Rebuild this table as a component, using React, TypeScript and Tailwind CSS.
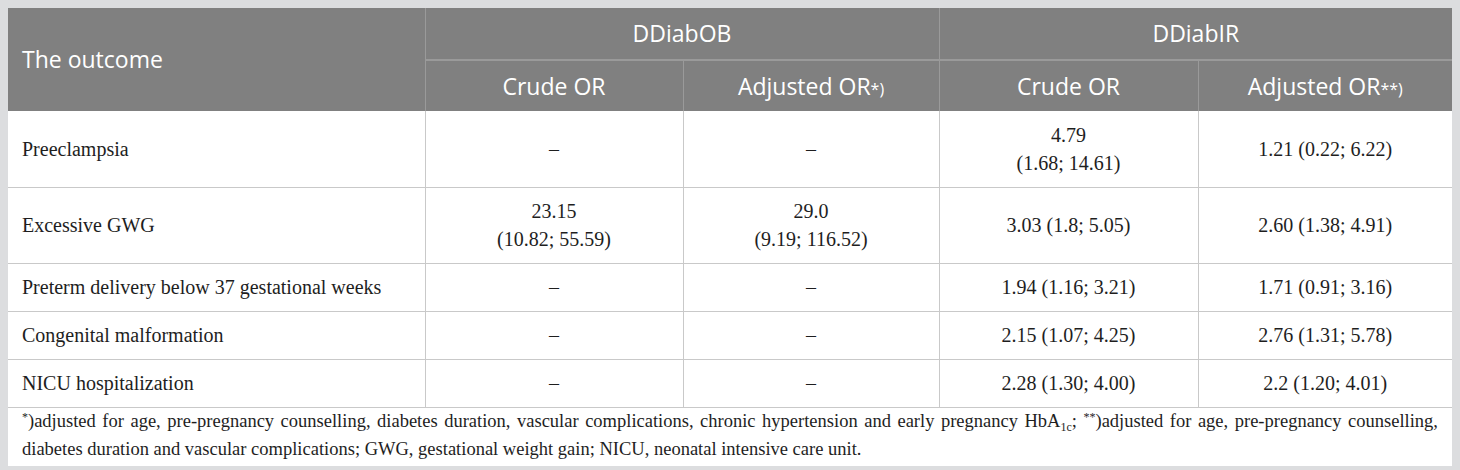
import React from "react";

const serif = { fontFamily: '"Liberation Serif", "Times New Roman", serif' };
const sans = { fontFamily: '"Open Sans", "Noto Sans", sans-serif' };

type Row = { label: string; c: React.ReactNode[]; tall?: boolean };

const rows: Row[] = [
  {
    label: "Preeclampsia",
    tall: true,
    c: ["–", "–", <>4.79<br />(1.68; 14.61)</>, "1.21 (0.22; 6.22)"],
  },
  {
    label: "Excessive GWG",
    tall: true,
    c: [
      <>23.15<br />(10.82; 55.59)</>,
      <>29.0<br />(9.19; 116.52)</>,
      "3.03 (1.8; 5.05)",
      "2.60 (1.38; 4.91)",
    ],
  },
  {
    label: "Preterm delivery below 37 gestational weeks",
    c: ["–", "–", "1.94 (1.16; 3.21)", "1.71 (0.91; 3.16)"],
  },
  {
    label: "Congenital malformation",
    c: ["–", "–", "2.15 (1.07; 4.25)", "2.76 (1.31; 5.78)"],
  },
  {
    label: "NICU hospitalization",
    c: ["–", "–", "2.28 (1.30; 4.00)", "2.2 (1.20; 4.01)"],
  },
];

export default function App() {
  return (
    <div className="w-[1460px] h-[470px] bg-[#dcdddf] pt-[8px] pl-[8px]">
      <div className="w-[1444px] bg-white">
        <table className="w-full border-collapse table-fixed">
          <colgroup>
            <col className="w-[417px]" />
            <col className="w-[258px]" />
            <col className="w-[256px]" />
            <col className="w-[259px]" />
            <col className="w-[254px]" />
          </colgroup>
          <thead style={sans} className="bg-[#808080] text-white text-[23px]">
            <tr className="h-[52px]">
              <th
                rowSpan={2}
                className="font-normal text-left pl-[14px] border-r border-[#9a9a9a] align-middle"
              >
                The outcome
              </th>
              <th colSpan={2} className="font-normal text-center border-r border-b-2 border-[#9a9a9a]">
                DDiabOB
              </th>
              <th colSpan={2} className="font-normal text-center border-b-2 border-[#9a9a9a]">
                DDiabIR
              </th>
            </tr>
            <tr className="h-[51px]">
              <th className="font-normal text-center border-r border-[#9a9a9a]">Crude OR</th>
              <th className="font-normal text-center border-r border-[#9a9a9a]">
                Adjusted OR<span className="text-[16px]">*)</span>
              </th>
              <th className="font-normal text-center border-r border-[#9a9a9a]">Crude OR</th>
              <th className="font-normal text-center">
                Adjusted OR<span className="text-[16px]">**)</span>
              </th>
            </tr>
          </thead>
          <tbody style={serif} className="text-[#1e1e1e] text-[20px] leading-[28px]">
            {rows.map((r, i) => (
              <tr key={i} className={`${r.tall ? "h-[76px]" : "h-[48px]"} border-b border-[#c9c9c9]`}>
                <td className="pl-[14px] border-r border-[#c9c9c9]">{r.label}</td>
                {r.c.map((v, j) => (
                  <td
                    key={j}
                    className={`text-center ${j < 3 ? "border-r border-[#c9c9c9]" : ""}`}
                  >
                    {v}
                  </td>
                ))}
              </tr>
            ))}
          </tbody>
        </table>
        <p
          style={serif}
          className="px-[14px] pt-0 pb-[4px] text-[18.5px] leading-[26px] text-[#1e1e1e] text-justify"
        >
          <span className="relative -top-[6px] text-[12px]">*</span>)adjusted for age, pre-pregnancy
          counselling, diabetes duration, vascular complications, chronic hypertension and early
          pregnancy HbA<span className="relative top-[4px] text-[12px]">1c</span>;{" "}
          <span className="relative -top-[6px] text-[12px]">**</span>)adjusted for age, pre-pregnancy
          counselling, diabetes duration and vascular complications; GWG, gestational weight gain;
          NICU, neonatal intensive care unit.
        </p>
      </div>
    </div>
  );
}
